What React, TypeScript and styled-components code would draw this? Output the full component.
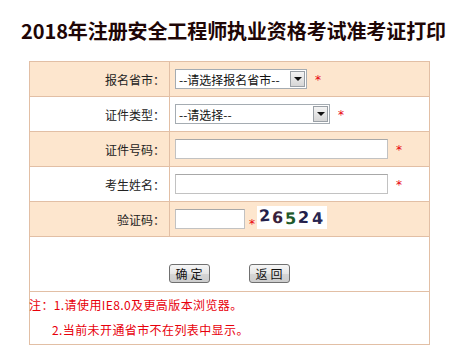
import styled, { createGlobalStyle } from 'styled-components';

const GlobalStyle = createGlobalStyle`
  html, body {
    margin: 0;
    padding: 0;
    background: #ffffff;
  }
  body {
    font-family: "Noto Sans CJK SC", "DejaVu Sans", sans-serif;
    font-size: 12px;
    color: #222;
  }
`;

const Page = styled.div`
  width: 463px;
`;

const Title = styled.h1`
  margin: 0;
  height: 61px;
  display: flex;
  align-items: center;
  justify-content: center;
  padding-left: 4px;
  box-sizing: border-box;
  font-size: 20px;
  font-weight: 700;
  color: #1e0606;
  letter-spacing: -0.1px;
`;

const Form = styled.div`
  margin-left: 29px;
  width: 401px;
  border: 1px solid #e2bfa5;
  box-sizing: border-box;
`;

const Row = styled.div<{ $shade?: boolean }>`
  display: flex;
  height: 35px;
  box-sizing: border-box;
  border-bottom: 1px solid #e2bfa5;
  background: ${(p) => (p.$shade ? '#fde6ce' : '#ffffff')};
`;

const Label = styled.div`
  width: 140px;
  box-sizing: border-box;
  border-right: 1px solid #e2bfa5;
  display: flex;
  align-items: center;
  justify-content: flex-end;
  padding-right: 4px;
  color: #222;
`;

const Field = styled.div`
  flex: 1;
  display: flex;
  align-items: center;
  padding-left: 5px;
`;

const SelectBox = styled.div<{ $w: number }>`
  width: ${(p) => p.$w}px;
  height: 20px;
  box-sizing: border-box;
  border: 1px solid #a5acb2;
  background: #fff;
  display: flex;
  align-items: center;
  justify-content: space-between;
  padding: 0 1px 0 3px;
  color: #111;
`;

const ArrowBtn = styled.div`
  width: 15px;
  height: 16px;
  box-sizing: border-box;
  border: 1px solid #9aa0a6;
  background: linear-gradient(#f4f4f4, #d6d6d6);
  display: flex;
  align-items: center;
  justify-content: center;
  &::after {
    content: '';
    border-left: 4px solid transparent;
    border-right: 4px solid transparent;
    border-top: 4px solid #111;
  }
`;

const TextInput = styled.input<{ $w: number }>`
  width: ${(p) => p.$w}px;
  height: 20px;
  box-sizing: border-box;
  border: 1px solid #c2c2c2;
  border-top-color: #a8a8a8;
  background: #fff;
  padding: 0 3px;
  margin: 0;
  outline: none;
`;

const Star = styled.span<{ $low?: boolean }>`
  color: #e8000b;
  margin-left: ${(p) => (p.$low ? 4 : 8)}px;
  font-family: "DejaVu Sans", sans-serif;
  font-size: 12px;
  position: relative;
  top: ${(p) => (p.$low ? 5 : 1)}px;
`;

const Captcha = styled.div`
  margin-left: 2px;
  width: 70px;
  height: 23px;
  margin-top: -4px;
  background: #fff;
  display: flex;
  align-items: center;
  padding-left: 2px;
  box-sizing: border-box;
  font-family: "DejaVu Sans", sans-serif;
  font-weight: 700;
  font-size: 16px;
`;

const Digit = styled.span<{ $c: string; $r: number; $y: number }>`
  color: ${(p) => p.$c};
  display: inline-block;
  transform: translateY(${(p) => p.$y}px) rotate(${(p) => p.$r}deg);
  margin-right: 2px;
`;

const ButtonRow = styled.div`
  height: 55px;
  box-sizing: border-box;
  border-bottom: 1px solid #e2bfa5;
  display: flex;
  justify-content: center;
  align-items: flex-start;
  gap: 39px;
  padding-top: 27px;
  padding-right: 1px;
`;

const Button = styled.button`
  width: 41px;
  height: 19px;
  box-sizing: border-box;
  padding: 0;
  border: 1px solid #707070;
  border-radius: 3px;
  background: linear-gradient(#f6f6f6 0%, #e6e6e6 50%, #d6d6d6 51%, #cdcdcd 100%);
  font-family: "Noto Sans CJK SC", sans-serif;
  font-size: 12px;
  line-height: 17px;
  color: #111;
  letter-spacing: 3px;
  text-indent: 3px;
`;

const Notes = styled.div`
  height: 52px;
  color: #e8000b;
  font-size: 12px;
  line-height: 25px;
  letter-spacing: 0.4px;
`;

const NoteLine = styled.div<{ $indent?: boolean }>`
  padding-left: ${(p) => (p.$indent ? 23 : 0)}px;
  margin-left: -1px;
`;

const digits = [
  { d: '2', c: '#23204a', r: -4, y: -2 },
  { d: '6', c: '#3a1f3a', r: 3, y: 0 },
  { d: '5', c: '#1f5a2a', r: -2, y: 1 },
  { d: '2', c: '#23204a', r: 2, y: 0 },
  { d: '4', c: '#2a2650', r: -3, y: 1 },
];

export default function App() {
  return (
    <Page>
      <GlobalStyle />
      <Title>2018年注册安全工程师执业资格考试准考证打印</Title>
      <Form>
        <Row $shade>
          <Label>报名省市：</Label>
          <Field>
            <SelectBox $w={132}>
              <span>--请选择报名省市--</span>
              <ArrowBtn />
            </SelectBox>
            <Star>*</Star>
          </Field>
        </Row>
        <Row>
          <Label>证件类型：</Label>
          <Field>
            <SelectBox $w={155}>
              <span>--请选择--</span>
              <ArrowBtn />
            </SelectBox>
            <Star>*</Star>
          </Field>
        </Row>
        <Row $shade>
          <Label>证件号码：</Label>
          <Field>
            <TextInput $w={213} />
            <Star>*</Star>
          </Field>
        </Row>
        <Row>
          <Label>考生姓名：</Label>
          <Field>
            <TextInput $w={213} />
            <Star>*</Star>
          </Field>
        </Row>
        <Row $shade>
          <Label>验证码：</Label>
          <Field>
            <TextInput $w={70} />
            <Star $low>*</Star>
            <Captcha>
              {digits.map((g, i) => (
                <Digit key={i} $c={g.c} $r={g.r} $y={g.y}>
                  {g.d}
                </Digit>
              ))}
            </Captcha>
          </Field>
        </Row>
        <ButtonRow>
          <Button>确定</Button>
          <Button>返回</Button>
        </ButtonRow>
        <Notes>
          <NoteLine>注：1.请使用IE8.0及更高版本浏览器。</NoteLine>
          <NoteLine $indent>2.当前未开通省市不在列表中显示。</NoteLine>
        </Notes>
      </Form>
    </Page>
  );
}
